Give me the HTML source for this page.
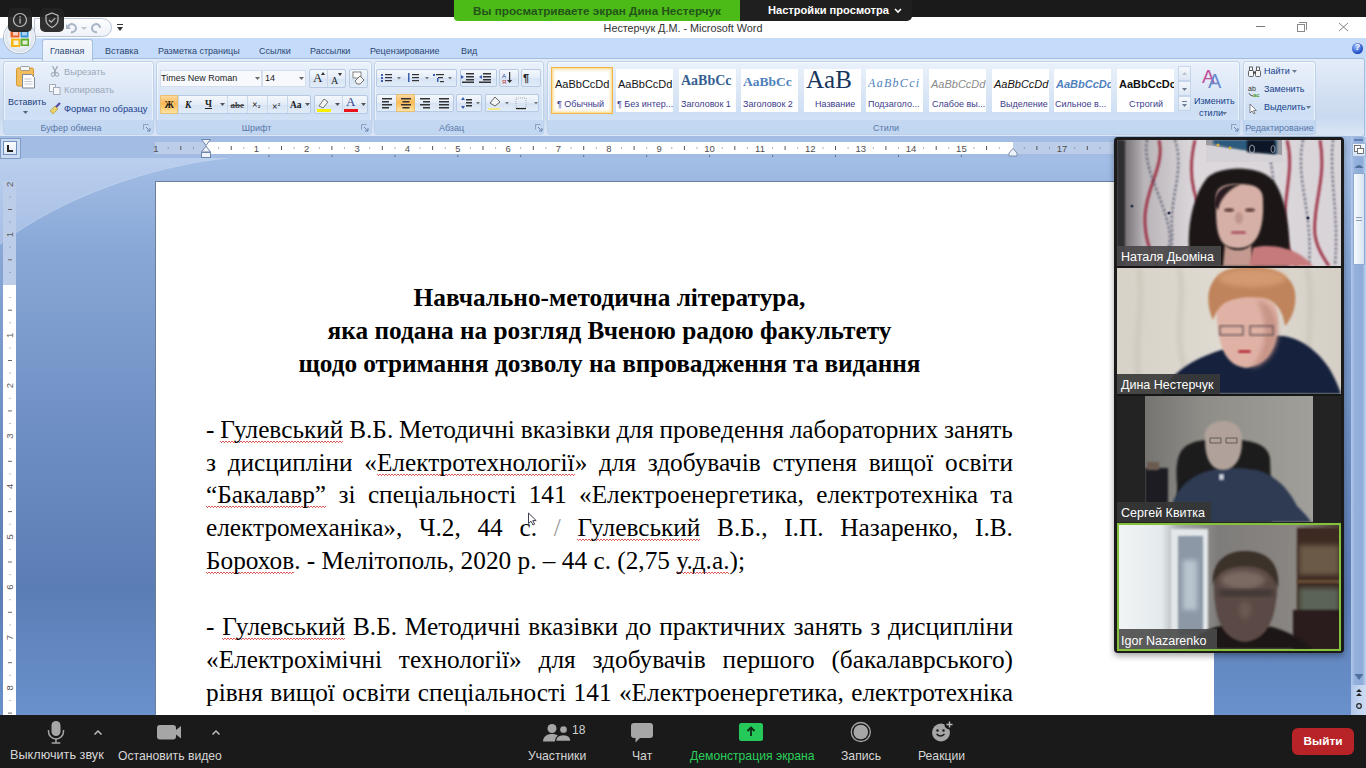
<!DOCTYPE html>
<html><head><meta charset="utf-8">
<style>
*{margin:0;padding:0;box-sizing:border-box}
html,body{width:1366px;height:768px;overflow:hidden;background:#1a1a1a;font-family:"Liberation Sans",sans-serif}
.a{position:absolute}
#ztop{left:0;top:0;width:1366px;height:17px;background:#1a1a1a}
#title{left:0;top:17px;width:1366px;height:21px;background:#fff}
#tabs{left:0;top:38px;width:1366px;height:22px;background:#c4dbf9}
#ribbon{left:0;top:58px;width:1365px;height:79px;border:1px solid #a3bcdf;border-left:none;border-radius:0 3px 3px 0;background:linear-gradient(#e4ecf8 0,#d3e0f2 45%,#c9d9ef 75%,#dbe7f7 100%)}
.grp{top:61px;height:74px;border:1px solid #bed1ea;box-shadow:inset 0 0 0 1px rgba(255,255,255,.55);border-radius:3px;background:linear-gradient(#eaf1fb 0,#dce7f6 40%,#cedff5 70%,#d6e4f6 100%)}
.glab{position:absolute;left:0;right:0;bottom:0;height:14px;padding-top:2px;background:linear-gradient(#c4d8f2,#c1d6f1);color:#5a78a8;font-size:9px;text-align:center;line-height:13px}
#rulerrow{left:0;top:137px;width:1366px;height:21px;background:#a2bce3}
#docbg{left:0;top:158px;width:1366px;height:557px;background:linear-gradient(#a3bee6 0,#88a7d6 17%,#6d8ec3 50%,#5b7db5 77%,#6a91cc 100%)}
#page{left:156px;top:182px;width:1058px;height:533px;background:#fff;box-shadow:-1px -1px 0 #6a7d9a}
#zbot{left:0;top:715px;width:1366px;height:53px;background:#1a1a1a}
.doc{position:absolute;left:206px;width:807px;font-family:"Liberation Serif",serif;font-size:25.3px;color:#000;white-space:nowrap;line-height:32.9px;height:32.9px}
.h{font-weight:bold;text-align:center}
.fj{display:flex;justify-content:space-between}.fj b{font-weight:normal}.sq{font-style:normal}
.sq{background-image:linear-gradient(45deg,transparent 30%,#e05a5a 35% 58%,transparent 58%),linear-gradient(-45deg,transparent 35%,#e05a5a 35% 58%,transparent 58%);background-size:3px 2px;background-repeat:repeat-x;background-position:0 100%}
.tab{position:absolute;top:45.5px;font-size:9px;color:#2c4674;white-space:nowrap}
.zl{position:absolute;top:748.5px;font-size:12.2px;color:#d6d6d6;white-space:nowrap}
.rt{position:absolute;font-size:9px;color:#15428b;white-space:nowrap;line-height:11px}
.sf{font-family:"Liberation Serif",serif;color:#222;line-height:14px}
.bg{position:absolute;border:1px solid #b6cae4;border-radius:2px;background:linear-gradient(#f5f8fc,#e3ecf8 50%,#d6e3f4 51%,#e2ecf8)}
.hl{position:absolute;border:1px solid #e8c070;border-radius:1px;background:linear-gradient(#fcd9a0,#fbb955 45%,#fbc466 60%,#fde3a4)}
.stile{position:absolute;top:69px;width:57px;height:43px;background:#fff}
.ssam{position:absolute;top:77px;white-space:nowrap;line-height:14px}
.slab{position:absolute;top:99px;font-size:9px;color:#3d3a8c;white-space:nowrap;line-height:11px}
.vn{position:absolute;font-size:12.5px;color:#fff;white-space:nowrap;line-height:14px}
</style></head><body>
<div id="ztop" class="a"></div>
<div id="title" class="a"></div>
<div id="tabs" class="a"></div>
<div class="a" style="left:0;top:58px;width:1366px;height:80px;background:#d6e3f5"></div>
<div id="ribbon" class="a"></div>
<!--TOPSTART-->
<!-- groups -->
<div class="a grp" style="left:3px;width:151px"><div class="glab" style="padding-right:15px">Буфер обмена</div></div>
<div class="a grp" style="left:156px;width:216px"><div class="glab" style="padding-right:15px">Шрифт</div></div>
<div class="a grp" style="left:374px;width:170px"><div class="glab" style="padding-right:15px">Абзац</div></div>
<div class="a grp" style="left:547px;width:693px"><div class="glab" style="padding-right:15px">Стили</div></div>
<div class="a grp" style="left:1243px;width:73px"><div class="glab">Редактирование</div></div>


<!-- zoom top banner -->
<div class="a" style="left:454px;top:0;width:286px;height:21px;background:#4cbb17;border-radius:0 0 0 4px;color:#24541a;font-weight:bold;font-size:11.7px;line-height:21px;text-align:center">Вы просматриваете экран Дина Нестерчук</div>
<div class="a" style="left:740px;top:0;width:172px;height:21px;background:#1f1f1f;border-radius:0 0 5px 0;color:#fff;font-weight:bold;font-size:11.1px;line-height:21px;padding-left:28px">Настройки просмотра</div>
<svg class="a" style="left:893px;top:7px" width="10" height="8"><path d="M2 2 L5 5 L8 2" stroke="#fff" stroke-width="1.6" fill="none"/></svg>
<!-- title -->
<div class="a" style="left:0;top:22px;width:1366px;text-align:center;font-size:10.8px;color:#333;padding-left:0">Нестерчук Д.М. - Microsoft Word</div>
<div class="a" style="left:1256px;top:26px;width:9px;height:1px;background:#777"></div>
<div class="a" style="left:1297px;top:24px;width:8px;height:8px;border:1px solid #888;background:#fff"></div>
<div class="a" style="left:1299px;top:22px;width:8px;height:8px;border-top:1px solid #888;border-right:1px solid #888"></div>
<svg class="a" style="left:1338px;top:22px" width="11" height="10"><path d="M1 1 L10 9 M10 1 L1 9" stroke="#888" stroke-width="1"/></svg>
<!-- QAT -->
<div class="a" style="left:34px;top:18px;width:78px;height:19px;border:1px solid #b9c6d8;border-radius:0 10px 10px 0;background:linear-gradient(#fdfdfe,#eef2f8)"></div>
<svg class="a" style="left:62px;top:21px" width="50" height="14"><path d="M6 7 a4 4 0 1 1 3 4" stroke="#a7b4c6" stroke-width="2" fill="none"/><path d="M4 3 l0 5 l5 0" fill="#a7b4c6"/><path d="M19 6 l3 3 l3 -3z" fill="#c0c8d4"/><path d="M38 7 a4 4 0 1 0 -3 4" stroke="#a7b4c6" stroke-width="2" fill="none"/></svg>
<svg class="a" style="left:116px;top:22px" width="8" height="12"><rect x="1" y="2" width="6" height="1" fill="#333"/><path d="M1 5 h6 l-3 4z" fill="#333"/></svg>
<!-- office button -->
<div class="a" style="left:4px;top:22px;width:31px;height:31px;border-radius:50%;background:radial-gradient(circle at 50% 45%,#ffffff 0,#eef2f7 45%,#cdd7e4 80%,#b9c5d5 100%);box-shadow:0 0 0 1px #aab6c6, inset 0 0 0 1px #f4f6fa"></div>
<svg class="a" style="left:10px;top:29px" width="20" height="19">
<rect x="0.5" y="1" width="9" height="7.5" fill="#e8632a"/><rect x="10.5" y="1" width="8" height="7.5" fill="#2f8fd8"/>
<rect x="1" y="9.5" width="9" height="8.5" fill="#f6b614"/><rect x="10.5" y="9.5" width="8.5" height="7.5" fill="#5faa2a"/>
<rect x="3" y="3" width="5" height="3.5" fill="#fff" opacity=".7"/><rect x="12" y="3" width="5" height="3.5" fill="#fff" opacity=".6"/>
<rect x="3.5" y="11.5" width="5" height="4.5" fill="#fff" opacity=".85"/><rect x="12.5" y="11.5" width="5" height="4" fill="#fff" opacity=".8"/>
</svg>
<!-- zoom overlay icons -->
<div class="a" style="left:8px;top:8px;width:24px;height:24px;border-radius:5px;background:rgba(34,34,34,.94)"></div>
<svg class="a" style="left:8px;top:8px" width="24" height="24"><circle cx="12" cy="12" r="6.5" stroke="#bbb" stroke-width="1.2" fill="none"/><rect x="11.4" y="10.5" width="1.3" height="5" fill="#bbb"/><rect x="11.4" y="8" width="1.3" height="1.4" fill="#bbb"/></svg>
<div class="a" style="left:40px;top:8px;width:24px;height:24px;border-radius:5px;background:rgba(34,34,34,.94)"></div>
<svg class="a" style="left:40px;top:8px" width="24" height="24"><path d="M12 5 L18 7.5 V12 C18 15.5 15 18 12 19.5 C9 18 6 15.5 6 12 V7.5 Z" stroke="#bbb" stroke-width="1.2" fill="none"/><path d="M9 12 l2.2 2.2 l4 -4" stroke="#bbb" stroke-width="1.2" fill="none"/></svg>
<!-- tabs -->
<div class="a" style="left:42px;top:39px;width:51px;height:22px;border:1px solid #a9c1e0;border-bottom:none;border-radius:3px 3px 0 0;background:linear-gradient(#f3f7fc,#e7eff9)"></div>
<div class="tab" style="left:50px">Главная</div>
<div class="tab" style="left:105px">Вставка</div>
<div class="tab" style="left:158px">Разметка страницы</div>
<div class="tab" style="left:259px">Ссылки</div>
<div class="tab" style="left:310px">Рассылки</div>
<div class="tab" style="left:370px">Рецензирование</div>
<div class="tab" style="left:461px">Вид</div>
<div class="a" style="left:1352px;top:43px;width:11px;height:11px;border-radius:50%;background:radial-gradient(circle at 40% 35%,#9cc0ff,#1b48c4 70%);box-shadow:0 0 0 1px #c8d6ea"></div>
<div class="a" style="left:1352px;top:42px;width:11px;font-size:9px;font-weight:bold;color:#fff;text-align:center">?</div>

<!--RIBBON-->
<!-- ribbon contents -->
<!-- clipboard -->
<svg class="a" style="left:15px;top:66px" width="22" height="23">
 <rect x="1.5" y="2" width="17" height="18" rx="1.5" fill="#f2bd5c" stroke="#d69a33" stroke-width="1"/>
 <rect x="5.5" y="0.5" width="9" height="4" rx="1" fill="#f7f7f7" stroke="#8a8a8a" stroke-width="0.8"/>
 <path d="M7.5 8.5 h9 l3 3 v10.5 h-12z" fill="#fdfdfd" stroke="#7f8a99" stroke-width="1"/>
 <path d="M9.5 13 h7 M9.5 15.5 h8 M9.5 18 h8" stroke="#c4c9d1" stroke-width="1"/>
</svg>
<div class="rt" style="left:8px;top:97px;color:#1d3f80">Вставить</div>
<svg class="a" style="left:23px;top:111px" width="5" height="3"><path d="M0 0 h5 l-2.5 3z" fill="#55647a"/></svg>
<svg class="a" style="left:50px;top:66px" width="10" height="11"><path d="M2.5 0 L6 7 M7.5 0 L4 7" stroke="#9aa5b3" stroke-width="1.2"/><circle cx="3" cy="8.5" r="1.8" fill="none" stroke="#9aa5b3" stroke-width="1"/><circle cx="7" cy="8.5" r="1.8" fill="none" stroke="#9aa5b3" stroke-width="1"/></svg>
<div class="rt" style="left:64px;top:67px;color:#9ba8b9;font-size:9.3px">Вырезать</div>
<svg class="a" style="left:49px;top:84px" width="12" height="11"><rect x="0.5" y="0.5" width="6" height="7" fill="#f4f6f9" stroke="#a3adba"/><rect x="4.5" y="3.5" width="6.5" height="7" fill="#f4f6f9" stroke="#a3adba"/></svg>
<div class="rt" style="left:64px;top:85px;color:#9ba8b9;font-size:9.3px">Копировать</div>
<svg class="a" style="left:49px;top:102px" width="13" height="12"><path d="M1 9 L6 4 L9 7 L4 12z" fill="#e8d26a" stroke="#a88d2a" stroke-width="0.6"/><path d="M7 5 L11 1" stroke="#5a4aa0" stroke-width="2.2"/></svg>
<div class="rt" style="left:64px;top:104px;color:#1d3f90;font-size:9.3px">Формат по образцу</div>
<svg class="a" style="left:143px;top:124px" width="8" height="8"><path d="M0.5 0.5 h5 M0.5 0.5 v5" stroke="#8aa2c4" stroke-width="1"/><path d="M3 3 L7 7 M7 4 v3 h-3" stroke="#6d87ad" stroke-width="1" fill="none"/></svg>

<!-- font group -->
<div class="a" style="left:160px;top:70px;width:102px;height:17px;background:#f7f9fc;border:1px solid #d3dfee"></div>
<div class="rt" style="left:161px;top:73px;color:#1a1a1a;font-size:9px">Times New Roman</div>
<svg class="a" style="left:255px;top:77px" width="5" height="3"><path d="M0 0 h5 l-2.5 3z" fill="#6a6a6a"/></svg>
<div class="a" style="left:262px;top:70px;width:44px;height:17px;background:#f7f9fc;border:1px solid #d3dfee"></div>
<div class="rt" style="left:265px;top:73px;color:#1a1a1a">14</div>
<svg class="a" style="left:299px;top:77px" width="5" height="3"><path d="M0 0 h5 l-2.5 3z" fill="#6a6a6a"/></svg>
<div class="bg" style="left:309px;top:69px;width:37px;height:19px"></div>
<div class="a" style="left:327px;top:70px;width:1px;height:17px;background:#c9d7ea"></div>
<div class="a sf" style="left:313px;top:71px;font-size:13px">A</div>
<div class="a sf" style="left:331px;top:74px;font-size:10px">A</div>
<svg class="a" style="left:321px;top:72px" width="4" height="3"><path d="M0 3 L2 0 L4 3" fill="#333"/></svg>
<svg class="a" style="left:338px;top:73px" width="4" height="3"><path d="M0 0 L2 3 L4 0" fill="#333"/></svg>
<div class="bg" style="left:349px;top:69px;width:19px;height:19px"></div>
<svg class="a" style="left:351px;top:71px" width="15" height="15"><rect x="2" y="1" width="8" height="6" fill="#fff" stroke="#666" stroke-width="0.8"/><path d="M4 10 L9 5 L13 9 L9 13 L6 13z" fill="#f4f4f4" stroke="#666" stroke-width="0.9"/></svg>

<div class="bg" style="left:160px;top:95px;width:151px;height:19px"></div>
<div class="hl" style="left:160px;top:95px;width:18px;height:19px"></div>
<div class="a sf" style="left:164.5px;top:97.5px;font-size:9.5px;font-weight:bold">Ж</div>
<div class="a sf" style="left:185px;top:97.5px;font-size:9.5px;font-weight:bold;font-style:italic">К</div>
<div class="a sf" style="left:205px;top:97px;font-size:9.5px;font-weight:bold;text-decoration:underline">Ч</div>
<svg class="a" style="left:220px;top:103px" width="5" height="3"><path d="M0 0 h5 l-2.5 3z" fill="#555"/></svg>
<div class="a sf" style="left:230.5px;top:97.5px;font-size:9px;font-weight:bold;text-decoration:line-through;color:#444">abe</div>
<div class="a sf" style="left:252px;top:97.5px;font-size:10px;font-weight:bold">×<span style="font-size:5px">2</span></div>
<div class="a sf" style="left:272px;top:97.5px;font-size:10px;font-weight:bold">×<span style="font-size:5px;vertical-align:4px">2</span></div>
<div class="a sf" style="left:290px;top:98px;font-size:9.5px;font-weight:bold">Aa</div>
<svg class="a" style="left:305px;top:103px" width="5" height="3"><path d="M0 0 h5 l-2.5 3z" fill="#555"/></svg>
<div class="a" style="left:178px;top:96px;width:1px;height:17px;background:#c9d7ea"></div>
<div class="a" style="left:227px;top:96px;width:1px;height:17px;background:#c9d7ea"></div>
<div class="a" style="left:247px;top:96px;width:1px;height:17px;background:#c9d7ea"></div>
<div class="a" style="left:267px;top:96px;width:1px;height:17px;background:#c9d7ea"></div>
<div class="a" style="left:287px;top:96px;width:1px;height:17px;background:#c9d7ea"></div>
<div class="bg" style="left:314px;top:95px;width:54px;height:19px"></div>
<svg class="a" style="left:316px;top:97px" width="16" height="16"><path d="M3 9 L8 2 L12 5 L7 11z" fill="#f4f4f4" stroke="#666" stroke-width="0.9"/><rect x="1" y="12" width="14" height="3" fill="#f8f000"/></svg>
<svg class="a" style="left:335px;top:103px" width="5" height="3"><path d="M0 0 h5 l-2.5 3z" fill="#555"/></svg>
<div class="a" style="left:342px;top:96px;width:1px;height:17px;background:#c9d7ea"></div>
<div class="a sf" style="left:346px;top:95px;font-size:13px;color:#2b3f8f">A</div>
<div class="a" style="left:344px;top:109px;width:14px;height:3px;background:#e8141a"></div>
<svg class="a" style="left:361px;top:103px" width="5" height="3"><path d="M0 0 h5 l-2.5 3z" fill="#555"/></svg>
<svg class="a" style="left:361px;top:124px" width="8" height="8"><path d="M0.5 0.5 h5 M0.5 0.5 v5" stroke="#8aa2c4" stroke-width="1"/><path d="M3 3 L7 7 M7 4 v3 h-3" stroke="#6d87ad" stroke-width="1" fill="none"/></svg>

<!-- paragraph group -->
<div class="bg" style="left:376px;top:69px;width:81px;height:18px"></div>
<div class="bg" style="left:460px;top:69px;width:37px;height:18px"></div>
<div class="bg" style="left:499px;top:69px;width:20px;height:18px"></div>
<div class="bg" style="left:521px;top:69px;width:20px;height:18px"></div>
<div class="bg" style="left:376px;top:94px;width:78px;height:18px"></div>
<div class="hl" style="left:396px;top:94px;width:19px;height:18px"></div>
<div class="bg" style="left:456px;top:94px;width:26px;height:18px"></div>
<div class="bg" style="left:485px;top:94px;width:54px;height:18px"></div>
<svg class="a" style="left:376px;top:69px" width="170" height="45">
 <g fill="#333">
 <!-- bullets -->
 <rect x="5" y="5" width="2" height="2" fill="#3b5fb0"/><rect x="5" y="8" width="2" height="2" fill="#3b5fb0"/><rect x="5" y="11" width="2" height="2" fill="#3b5fb0"/>
 <rect x="9" y="5" width="7" height="1.2"/><rect x="9" y="8" width="7" height="1.2"/><rect x="9" y="11" width="7" height="1.2"/>
 <path d="M21 8 h4 l-2 2.5z" fill="#777"/>
 <rect x="32" y="4" width="1.5" height="9" fill="#3b5fb0"/>
 <rect x="36" y="5" width="7" height="1.2"/><rect x="36" y="8" width="7" height="1.2"/><rect x="36" y="11" width="7" height="1.2"/>
 <path d="M49 8 h4 l-2 2.5z" fill="#777"/>
 <rect x="57" y="5" width="2" height="2" fill="#3b5fb0"/><rect x="60" y="5" width="8" height="1.2"/><rect x="62" y="8" width="5" height="1.2"/><rect x="61" y="9" width="1.5" height="4" fill="#3b5fb0"/><rect x="64" y="12" width="4" height="1.2"/>
 <path d="M72 8 h4 l-2 2.5z" fill="#777"/>
 <!-- indents -->
 <rect x="90" y="4" width="8" height="1.5"/><rect x="90" y="7" width="8" height="1.5"/><rect x="90" y="10" width="8" height="1.5"/><path d="M85 6 l3 2 l-3 2z" fill="#3b5fb0"/><rect x="86" y="12.5" width="12" height="1.5"/>
 <rect x="107" y="4" width="8" height="1.5"/><rect x="107" y="7" width="8" height="1.5"/><rect x="107" y="10" width="8" height="1.5"/><path d="M106 6 l-3 2 l3 2z" fill="#3b5fb0"/><rect x="103" y="12.5" width="12" height="1.5"/>
 <!-- sort -->
 <text x="126" y="9" font-size="6" font-family="Liberation Sans" fill="#2b4a9a">A</text><text x="126" y="15" font-size="6" font-family="Liberation Sans" fill="#c0302a">Я</text><rect x="133" y="3" width="1.2" height="10"/><path d="M131 11 l2.6 3 l2.6 -3z"/>
 <!-- pilcrow -->
 <text x="147" y="13" font-size="11" font-weight="bold" font-family="Liberation Sans" fill="#222">¶</text>
 <!-- align -->
 <g transform="translate(0,25)">
 <rect x="6" y="4" width="10" height="1.5"/><rect x="6" y="7" width="7" height="1.5"/><rect x="6" y="10" width="10" height="1.5"/><rect x="6" y="13" width="7" height="1.5"/>
 <rect x="25" y="4" width="10" height="1.5"/><rect x="26.5" y="7" width="7" height="1.5"/><rect x="25" y="10" width="10" height="1.5"/><rect x="26.5" y="13" width="7" height="1.5"/>
 <rect x="44" y="4" width="10" height="1.5"/><rect x="47" y="7" width="7" height="1.5"/><rect x="44" y="10" width="10" height="1.5"/><rect x="47" y="13" width="7" height="1.5"/>
 <rect x="63" y="4" width="10" height="1.5"/><rect x="63" y="7" width="10" height="1.5"/><rect x="63" y="10" width="10" height="1.5"/><rect x="63" y="13" width="10" height="1.5"/>
 <path d="M85 6 l2 -3 l2 3z M85 12 l2 3 l2 -3z" fill="#3b5fb0"/><rect x="90" y="5" width="6" height="1.5"/><rect x="90" y="8" width="6" height="1.5"/><rect x="90" y="11" width="6" height="1.5"/>
 <path d="M100 8 h4 l-2 2.5z" fill="#777"/>
 <path d="M114 9 l5 -6 l5 5 l-5 4z" fill="#f4f4f4" stroke="#555" stroke-width="0.9"/><rect x="112" y="14" width="12" height="2" fill="#f4e98a"/>
 <path d="M129 8 h4 l-2 2.5z" fill="#777"/>
 <rect x="140" y="4" width="10" height="10" fill="none" stroke="#999" stroke-width="0.8" stroke-dasharray="1 1"/><rect x="140" y="14" width="10" height="1.2" fill="#222"/>
 <path d="M158 8 h4 l-2 2.5z" fill="#777"/>
 </g>
 </g>
</svg>
<svg class="a" style="left:535px;top:124px" width="8" height="8"><path d="M0.5 0.5 h5 M0.5 0.5 v5" stroke="#8aa2c4" stroke-width="1"/><path d="M3 3 L7 7 M7 4 v3 h-3" stroke="#6d87ad" stroke-width="1" fill="none"/></svg>

<!-- styles gallery -->
<div class="a" style="left:551px;top:67px;width:62px;height:47px;border:1px solid #f0b64a;box-shadow:inset 0 0 0 1px #fde09a, inset 0 0 3px 2px #fbe7b8;background:#fff"></div>
<div class="stile" style="left:616px"></div>
<div class="stile" style="left:679px"></div>
<div class="stile" style="left:741px"></div>
<div class="stile" style="left:804px"></div>
<div class="stile" style="left:866px"></div>
<div class="stile" style="left:929px"></div>
<div class="stile" style="left:992px"></div>
<div class="stile" style="left:1054px"></div>
<div class="stile" style="left:1117px"></div>
<div class="ssam" style="left:555px;font-size:11px;color:#111">AaBbCcDd</div>
<div class="slab" style="left:557px">¶ Обычный</div>
<div class="ssam" style="left:618px;font-size:11px;color:#111">AaBbCcDd</div>
<div class="slab" style="left:617px">¶ Без интер...</div>
<div class="ssam" style="left:681px;width:55px;overflow:hidden;font-family:'Liberation Serif',serif;font-weight:bold;font-size:14px;color:#365f91;top:74px">AaBbCc</div>
<div class="slab" style="left:681px">Заголовок 1</div>
<div class="ssam" style="left:743px;width:55px;overflow:hidden;font-family:'Liberation Serif',serif;font-weight:bold;font-size:13.5px;color:#4f81bd;top:75px">AaBbCc</div>
<div class="slab" style="left:743px">Заголовок 2</div>
<div class="ssam" style="left:806px;font-family:'Liberation Serif',serif;font-size:25px;color:#17365d;top:66px;line-height:28px;width:54px;overflow:hidden">AaB</div>
<div class="slab" style="left:815px">Название</div>
<div class="ssam" style="left:868px;width:55px;overflow:hidden;font-family:'Liberation Serif',serif;font-style:italic;font-size:12px;letter-spacing:1.3px;color:#4f81bd;top:76px">AaBbCci</div>
<div class="slab" style="left:868px">Подзаголо...</div>
<div class="ssam" style="left:931px;font-style:italic;font-size:11px;color:#8a8a8a">AaBbCcDd</div>
<div class="slab" style="left:932px">Слабое вы...</div>
<div class="ssam" style="left:994px;font-style:italic;font-size:11px;color:#111">AaBbCcDd</div>
<div class="slab" style="left:1000px">Выделение</div>
<div class="ssam" style="left:1056px;width:55px;overflow:hidden;font-style:italic;font-weight:bold;font-size:11px;color:#4f81bd">AaBbCcDd</div>
<div class="slab" style="left:1055px">Сильное в...</div>
<div class="ssam" style="left:1119px;width:55px;overflow:hidden;font-weight:bold;font-size:11px;color:#111">AaBbCcDc</div>
<div class="slab" style="left:1129px">Строгий</div>
<!-- scroll buttons -->
<div class="a" style="left:1178px;top:66px;width:13px;height:15px;background:linear-gradient(#f4f7fb,#dde7f4);border:1px solid #c6d6ea"></div>
<div class="a" style="left:1178px;top:81px;width:13px;height:15px;background:linear-gradient(#f4f7fb,#dde7f4);border:1px solid #c6d6ea"></div>
<div class="a" style="left:1178px;top:96px;width:13px;height:15px;background:linear-gradient(#f4f7fb,#dde7f4);border:1px solid #c6d6ea"></div>
<svg class="a" style="left:1178px;top:66px" width="13" height="45"><path d="M4 9 l2.5 -3 l2.5 3z" fill="#b9c3cf"/><path d="M4 22 h5 l-2.5 3z" fill="#6d7c90"/><rect x="4" y="35" width="5" height="1" fill="#6d7c90"/><path d="M4 38 h5 l-2.5 3z" fill="#6d7c90"/></svg>
<!-- change styles -->
<svg class="a" style="left:1202px;top:66px" width="30" height="24">
<text x="0" y="17" font-family="Liberation Sans" font-size="19" fill="#c0509a">A</text>
<text x="6" y="22" font-family="Liberation Sans" font-size="20" fill="#5a7fc8" fill-opacity=".9">A</text>
</svg>
<div class="rt" style="left:1194px;top:96px">Изменить</div>
<div class="rt" style="left:1199px;top:108px">стили</div>
<svg class="a" style="left:1222px;top:112px" width="5" height="3"><path d="M0 0 h5 l-2.5 3z" fill="#6a7a90"/></svg>
<svg class="a" style="left:1231px;top:124px" width="8" height="8"><path d="M0.5 0.5 h5 M0.5 0.5 v5" stroke="#8aa2c4" stroke-width="1"/><path d="M3 3 L7 7 M7 4 v3 h-3" stroke="#6d87ad" stroke-width="1" fill="none"/></svg>
<!-- editing -->
<svg class="a" style="left:1248px;top:66px" width="14" height="48">
<g fill="#f4f6f8" stroke="#444" stroke-width="0.8"><rect x="0.5" y="4.5" width="5" height="6" rx="1"/><rect x="7.5" y="4.5" width="5" height="6" rx="1"/><rect x="1.5" y="1" width="3" height="3.5"/><rect x="8.5" y="1" width="3" height="3.5"/></g><rect x="5" y="5.5" width="3" height="2" fill="#444"/>
<text x="0" y="25" font-family="Liberation Sans" font-size="7" fill="#333">ab</text><text x="5" y="31" font-family="Liberation Sans" font-size="6" font-weight="bold" fill="#4a9a2a">ac</text><path d="M1 27 q1 3 4 3" stroke="#333" stroke-width="0.8" fill="none"/>
<path d="M2 38 v9 l2 -2 l2 3 l1 -0.5 l-1.6 -3 h3z" fill="#fff" stroke="#555" stroke-width="0.7"/>
</svg>
<div class="rt" style="left:1264px;top:66px">Найти</div>
<svg class="a" style="left:1292px;top:70px" width="5" height="3"><path d="M0 0 h5 l-2.5 3z" fill="#6a7a90"/></svg>
<div class="rt" style="left:1264px;top:84px">Заменить</div>
<div class="rt" style="left:1264px;top:102px">Выделить</div>
<svg class="a" style="left:1306px;top:106px" width="5" height="3"><path d="M0 0 h5 l-2.5 3z" fill="#6a7a90"/></svg>

<!--/RIBBON-->
<div id="rulerrow" class="a"></div>
<div id="docbg" class="a"></div>
<svg class="a" style="left:0;top:158px" width="1366" height="120"><defs><linearGradient id="swg" x1="0" y1="0" x2="0" y2="1"><stop offset="0" stop-color="#c4d6f1"/><stop offset="1" stop-color="#b2c7ea"/></linearGradient></defs><path d="M0 0 H228 C150 8 60 40 0 86 Z" fill="url(#swg)" opacity=".7"/><path d="M228 0 C150 8 60 40 0 86" stroke="#c8d8f0" stroke-width="1" fill="none" opacity=".6"/></svg>
<div id="page" class="a"></div>
<!--RULER-->
<svg class="a" style="left:0;top:137px" width="1366" height="22">
<rect x="155" y="5" width="958" height="12" fill="#bccde9"/>
<rect x="206" y="5" width="807" height="12" fill="#fff"/><text x="156" y="15" font-family="Liberation Sans" font-size="9.5" fill="#505050" text-anchor="middle">1</text><rect x="268.4" y="18" width="1" height="2" fill="#5c6f8c"/><rect x="331.4" y="18" width="1" height="2" fill="#5c6f8c"/><rect x="394.4" y="18" width="1" height="2" fill="#5c6f8c"/><rect x="457.3" y="18" width="1" height="2" fill="#5c6f8c"/><rect x="520.2" y="18" width="1" height="2" fill="#5c6f8c"/><rect x="583.2" y="18" width="1" height="2" fill="#5c6f8c"/><rect x="646.2" y="18" width="1" height="2" fill="#5c6f8c"/><rect x="709.1" y="18" width="1" height="2" fill="#5c6f8c"/><rect x="772.1" y="18" width="1" height="2" fill="#5c6f8c"/><rect x="835.0" y="18" width="1" height="2" fill="#5c6f8c"/><rect x="898.0" y="18" width="1" height="2" fill="#5c6f8c"/><rect x="960.9" y="18" width="1" height="2" fill="#5c6f8c"/>
<rect x="167.7" y="10.5" width="1" height="1" fill="#666"/>
<rect x="180.3" y="9" width="1" height="4" fill="#555"/>
<rect x="192.9" y="10.5" width="1" height="1" fill="#666"/>
<rect x="218.1" y="10.5" width="1" height="1" fill="#666"/>
<rect x="230.7" y="9" width="1" height="4" fill="#555"/>
<rect x="243.3" y="10.5" width="1" height="1" fill="#666"/>
<text x="256.4" y="15" font-family="Liberation Sans" font-size="9.5" fill="#505050" text-anchor="middle">1</text>
<rect x="268.4" y="10.5" width="1" height="1" fill="#666"/>
<rect x="281.0" y="9" width="1" height="4" fill="#555"/>
<rect x="293.6" y="10.5" width="1" height="1" fill="#666"/>
<text x="306.7" y="15" font-family="Liberation Sans" font-size="9.5" fill="#505050" text-anchor="middle">2</text>
<rect x="318.8" y="10.5" width="1" height="1" fill="#666"/>
<rect x="331.4" y="9" width="1" height="4" fill="#555"/>
<rect x="344.0" y="10.5" width="1" height="1" fill="#666"/>
<text x="357.1" y="15" font-family="Liberation Sans" font-size="9.5" fill="#505050" text-anchor="middle">3</text>
<rect x="369.2" y="10.5" width="1" height="1" fill="#666"/>
<rect x="381.8" y="9" width="1" height="4" fill="#555"/>
<rect x="394.4" y="10.5" width="1" height="1" fill="#666"/>
<text x="407.4" y="15" font-family="Liberation Sans" font-size="9.5" fill="#505050" text-anchor="middle">4</text>
<rect x="419.5" y="10.5" width="1" height="1" fill="#666"/>
<rect x="432.1" y="9" width="1" height="4" fill="#555"/>
<rect x="444.7" y="10.5" width="1" height="1" fill="#666"/>
<text x="457.8" y="15" font-family="Liberation Sans" font-size="9.5" fill="#505050" text-anchor="middle">5</text>
<rect x="469.9" y="10.5" width="1" height="1" fill="#666"/>
<rect x="482.5" y="9" width="1" height="4" fill="#555"/>
<rect x="495.1" y="10.5" width="1" height="1" fill="#666"/>
<text x="508.2" y="15" font-family="Liberation Sans" font-size="9.5" fill="#505050" text-anchor="middle">6</text>
<rect x="520.2" y="10.5" width="1" height="1" fill="#666"/>
<rect x="532.8" y="9" width="1" height="4" fill="#555"/>
<rect x="545.4" y="10.5" width="1" height="1" fill="#666"/>
<text x="558.5" y="15" font-family="Liberation Sans" font-size="9.5" fill="#505050" text-anchor="middle">7</text>
<rect x="570.6" y="10.5" width="1" height="1" fill="#666"/>
<rect x="583.2" y="9" width="1" height="4" fill="#555"/>
<rect x="595.8" y="10.5" width="1" height="1" fill="#666"/>
<text x="608.9" y="15" font-family="Liberation Sans" font-size="9.5" fill="#505050" text-anchor="middle">8</text>
<rect x="621.0" y="10.5" width="1" height="1" fill="#666"/>
<rect x="633.6" y="9" width="1" height="4" fill="#555"/>
<rect x="646.1" y="10.5" width="1" height="1" fill="#666"/>
<text x="659.2" y="15" font-family="Liberation Sans" font-size="9.5" fill="#505050" text-anchor="middle">9</text>
<rect x="671.3" y="10.5" width="1" height="1" fill="#666"/>
<rect x="683.9" y="9" width="1" height="4" fill="#555"/>
<rect x="696.5" y="10.5" width="1" height="1" fill="#666"/>
<text x="709.6" y="15" font-family="Liberation Sans" font-size="9.5" fill="#505050" text-anchor="middle">10</text>
<rect x="721.7" y="10.5" width="1" height="1" fill="#666"/>
<rect x="734.3" y="9" width="1" height="4" fill="#555"/>
<rect x="746.9" y="10.5" width="1" height="1" fill="#666"/>
<text x="760.0" y="15" font-family="Liberation Sans" font-size="9.5" fill="#505050" text-anchor="middle">11</text>
<rect x="772.0" y="10.5" width="1" height="1" fill="#666"/>
<rect x="784.6" y="9" width="1" height="4" fill="#555"/>
<rect x="797.2" y="10.5" width="1" height="1" fill="#666"/>
<text x="810.3" y="15" font-family="Liberation Sans" font-size="9.5" fill="#505050" text-anchor="middle">12</text>
<rect x="822.4" y="10.5" width="1" height="1" fill="#666"/>
<rect x="835.0" y="9" width="1" height="4" fill="#555"/>
<rect x="847.6" y="10.5" width="1" height="1" fill="#666"/>
<text x="860.7" y="15" font-family="Liberation Sans" font-size="9.5" fill="#505050" text-anchor="middle">13</text>
<rect x="872.8" y="10.5" width="1" height="1" fill="#666"/>
<rect x="885.4" y="9" width="1" height="4" fill="#555"/>
<rect x="898.0" y="10.5" width="1" height="1" fill="#666"/>
<text x="911.0" y="15" font-family="Liberation Sans" font-size="9.5" fill="#505050" text-anchor="middle">14</text>
<rect x="923.1" y="10.5" width="1" height="1" fill="#666"/>
<rect x="935.7" y="9" width="1" height="4" fill="#555"/>
<rect x="948.3" y="10.5" width="1" height="1" fill="#666"/>
<text x="961.4" y="15" font-family="Liberation Sans" font-size="9.5" fill="#505050" text-anchor="middle">15</text>
<rect x="973.5" y="10.5" width="1" height="1" fill="#666"/>
<rect x="986.1" y="9" width="1" height="4" fill="#555"/>
<rect x="998.7" y="10.5" width="1" height="1" fill="#666"/>

<rect x="1023.8" y="10.5" width="1" height="1" fill="#666"/>
<rect x="1036.4" y="9" width="1" height="4" fill="#555"/>
<rect x="1049.0" y="10.5" width="1" height="1" fill="#666"/>
<text x="1062.1" y="15" font-family="Liberation Sans" font-size="9.5" fill="#505050" text-anchor="middle">17</text>
<rect x="1074.2" y="10.5" width="1" height="1" fill="#666"/>
<rect x="1086.8" y="9" width="1" height="4" fill="#555"/>
<rect x="1099.4" y="10.5" width="1" height="1" fill="#666"/>
</svg>
<svg class="a" style="left:0;top:160px" width="20" height="555">
<rect x="3" y="21" width="13" height="534" fill="#fff"/>
<rect x="3" y="21" width="13" height="104" fill="#bccde9"/>
<text transform="translate(13,24.3) rotate(-90)" font-family="Liberation Sans" font-size="9.5" fill="#5a5a5a" text-anchor="middle">2</text>
<rect x="9.5" y="36.4" width="1" height="1" fill="#808080"/>
<rect x="8" y="49.0" width="4" height="1" fill="#6a6a6a"/>
<rect x="9.5" y="61.5" width="1" height="1" fill="#808080"/>
<text transform="translate(13,74.6) rotate(-90)" font-family="Liberation Sans" font-size="9.5" fill="#5a5a5a" text-anchor="middle">1</text>
<rect x="9.5" y="86.7" width="1" height="1" fill="#808080"/>
<rect x="8" y="99.3" width="4" height="1" fill="#6a6a6a"/>
<rect x="9.5" y="111.9" width="1" height="1" fill="#808080"/>
<rect x="9.5" y="137.1" width="1" height="1" fill="#808080"/>
<rect x="8" y="149.7" width="4" height="1" fill="#6a6a6a"/>
<rect x="9.5" y="162.3" width="1" height="1" fill="#808080"/>
<text transform="translate(13,175.4) rotate(-90)" font-family="Liberation Sans" font-size="9.5" fill="#5a5a5a" text-anchor="middle">1</text>
<rect x="9.5" y="187.4" width="1" height="1" fill="#808080"/>
<rect x="8" y="200.0" width="4" height="1" fill="#6a6a6a"/>
<rect x="9.5" y="212.6" width="1" height="1" fill="#808080"/>
<text transform="translate(13,225.7) rotate(-90)" font-family="Liberation Sans" font-size="9.5" fill="#5a5a5a" text-anchor="middle">2</text>
<rect x="9.5" y="237.8" width="1" height="1" fill="#808080"/>
<rect x="8" y="250.4" width="4" height="1" fill="#6a6a6a"/>
<rect x="9.5" y="263.0" width="1" height="1" fill="#808080"/>
<text transform="translate(13,276.1) rotate(-90)" font-family="Liberation Sans" font-size="9.5" fill="#5a5a5a" text-anchor="middle">3</text>
<rect x="9.5" y="288.2" width="1" height="1" fill="#808080"/>
<rect x="8" y="300.8" width="4" height="1" fill="#6a6a6a"/>
<rect x="9.5" y="313.4" width="1" height="1" fill="#808080"/>
<text transform="translate(13,326.4) rotate(-90)" font-family="Liberation Sans" font-size="9.5" fill="#5a5a5a" text-anchor="middle">4</text>
<rect x="9.5" y="338.5" width="1" height="1" fill="#808080"/>
<rect x="8" y="351.1" width="4" height="1" fill="#6a6a6a"/>
<rect x="9.5" y="363.7" width="1" height="1" fill="#808080"/>
<text transform="translate(13,376.8) rotate(-90)" font-family="Liberation Sans" font-size="9.5" fill="#5a5a5a" text-anchor="middle">5</text>
<rect x="9.5" y="388.9" width="1" height="1" fill="#808080"/>
<rect x="8" y="401.5" width="4" height="1" fill="#6a6a6a"/>
<rect x="9.5" y="414.1" width="1" height="1" fill="#808080"/>
<text transform="translate(13,427.2) rotate(-90)" font-family="Liberation Sans" font-size="9.5" fill="#5a5a5a" text-anchor="middle">6</text>
<rect x="9.5" y="439.2" width="1" height="1" fill="#808080"/>
<rect x="8" y="451.8" width="4" height="1" fill="#6a6a6a"/>
<rect x="9.5" y="464.4" width="1" height="1" fill="#808080"/>
<text transform="translate(13,477.5) rotate(-90)" font-family="Liberation Sans" font-size="9.5" fill="#5a5a5a" text-anchor="middle">7</text>
<rect x="9.5" y="489.6" width="1" height="1" fill="#808080"/>
<rect x="8" y="502.2" width="4" height="1" fill="#6a6a6a"/>
<rect x="9.5" y="514.8" width="1" height="1" fill="#808080"/>
<text transform="translate(13,527.9) rotate(-90)" font-family="Liberation Sans" font-size="9.5" fill="#5a5a5a" text-anchor="middle">8</text>
<rect x="9.5" y="540.0" width="1" height="1" fill="#808080"/>
<rect x="8" y="552.6" width="4" height="1" fill="#6a6a6a"/>
</svg>
<svg class="a" style="left:200px;top:138px" width="13" height="22"><path d="M1.5 1.5 h9 l-4.5 6z" fill="#eef3fa" stroke="#6e87aa" stroke-width="1"/><path d="M6 8 l4.5 6 h-9z" fill="#eef3fa" stroke="#6e87aa" stroke-width="1"/><rect x="1.5" y="14.5" width="9" height="5" fill="#eef3fa" stroke="#6e87aa" stroke-width="1"/></svg>
<svg class="a" style="left:1007px;top:147px" width="13" height="11"><path d="M6 1.5 l4 4.5 v3 h-8 v-3z" fill="#eef3fa" stroke="#7d90ad" stroke-width="1"/></svg>
<div class="a" style="left:0;top:138px;width:21px;height:21px;border:1px solid #7f9dc8;background:#c9daf1"></div>
<div class="a" style="left:3px;top:141px;width:14px;height:14px;border:1px solid #6f8fc0;background:linear-gradient(#fafcff,#dfe9f6)"></div>
<div class="a" style="left:7px;top:145px;width:2px;height:7px;background:#222"></div>
<div class="a" style="left:7px;top:150px;width:6px;height:2px;background:#222"></div>
<!-- scrollbar -->
<div class="a" style="left:1351px;top:137px;width:15px;height:578px;background:linear-gradient(90deg,#b3c8ea 0,#94b0dc 25%,#8fabd9 75%,#c0d3ef 100%)"></div>
<div class="a" style="left:1354px;top:139px;width:9px;height:2px;background:#5f7fb2"></div>
<div class="a" style="left:1352px;top:143px;width:14px;height:14px;background:linear-gradient(#f0f5fc,#d4e1f3);border:1px solid #9db6da"></div>
<svg class="a" style="left:1354px;top:145px" width="11" height="10"><rect x="0.5" y="0.5" width="6" height="6" fill="#fff" stroke="#555" stroke-width="0.8"/><rect x="3.5" y="3.5" width="6" height="5" fill="#fff" stroke="#555" stroke-width="0.8"/></svg>
<svg class="a" style="left:1353px;top:162px" width="12" height="8"><path d="M1.5 6 q4.5 -6 9 0z" fill="#50709e"/></svg>
<div class="a" style="left:1353px;top:173px;width:12px;height:92px;border:1px solid #8ea8d0;border-radius:1px;background:linear-gradient(90deg,#f6f9fd,#e6eef8 60%,#d6e2f3)"></div>
<div class="a" style="left:1356px;top:217px;width:6px;height:1px;background:#8a9cb6"></div>
<div class="a" style="left:1356px;top:220px;width:6px;height:1px;background:#8a9cb6"></div>
<svg class="a" style="left:1353px;top:673px" width="12" height="8"><path d="M1.5 1 h9 l-4.5 6z" fill="#50709e"/></svg>
<div class="a" style="left:1351px;top:685px;width:15px;height:30px;background:linear-gradient(90deg,#b4caeb,#cddcf3)"></div>
<svg class="a" style="left:1353px;top:688px" width="12" height="24"><path d="M3 4 l3 -3 l3 3z M3 8 l3 -3 l3 3z" fill="#222"/><circle cx="6" cy="18" r="2.3" fill="none" stroke="#222" stroke-width="1.2"/></svg>

<!--/RULER-->

<div class="doc h" style="top:281px">Навчально-методична література,</div>
<div class="doc h" style="top:313.9px">яка подана на розгляд Вченою радою факультету</div>
<div class="doc h" style="top:346.8px;letter-spacing:-0.08px">щодо отримання дозволу на впровадження та видання</div>

<div class="doc fj" style="top:412.6px"><b>-</b><b><i class="sq">Гулевський</i></b><b>В.Б.</b><b>Методичні</b><b>вказівки</b><b>для</b><b>проведення</b><b>лабораторних</b><b>занять</b></div>
<div class="doc fj" style="top:445.5px"><b>з</b><b>дисципліни</b><b>«<i class="sq">Електротехнології</i>»</b><b>для</b><b>здобувачів</b><b>ступеня</b><b>вищої</b><b>освіти</b></div>
<div class="doc fj" style="top:478.4px"><b><i class="sq">“Бакалавр”</i></b><b>зі</b><b>спеціальності</b><b>141</b><b>«Електроенергетика,</b><b>електротехніка</b><b>та</b></div>
<div class="doc fj" style="top:511.3px"><b>електромеханіка»,</b><b>Ч.2,</b><b>44</b><b>с.</b><b style="color:#9a9a9a">/</b><b><i class="sq">Гулевський</i></b><b>В.Б.,</b><b>І.П.</b><b>Назаренко,</b><b>І.В.</b></div>
<div class="doc" style="top:544.2px"><i class="sq">Борохов</i>. - Мелітополь, 2020 р. – 44 с. (2,75 <i class="sq">у.д.а.</i>);</div>
<div class="doc fj" style="top:610.0px"><b>-</b><b><i class="sq">Гулевський</i></b><b>В.Б.</b><b>Методичні</b><b>вказівки</b><b>до</b><b>практичних</b><b>занять</b><b>з</b><b>дисципліни</b></div>
<div class="doc fj" style="top:642.9px"><b>«Електрохімічні</b><b>технології»</b><b>для</b><b>здобувачів</b><b>першого</b><b>(бакалаврського)</b></div>
<div class="doc fj" style="top:675.8px"><b>рівня</b><b>вищої</b><b>освіти</b><b>спеціальності</b><b>141</b><b>«Електроенергетика,</b><b>електротехніка</b></div>

<svg class="a" style="left:527px;top:512px" width="10" height="14"><path d="M1.5 1 V11.5 L4 9.2 L6 13 L7.6 12.2 L5.8 8.6 H9.2 Z" fill="#fff" stroke="#2a2a40" stroke-width="0.9" stroke-linejoin="round"/></svg>
<!--VIDEO-->
<!-- video panel -->
<div class="a" style="left:1114px;top:137px;width:230px;height:516px;background:#1b1b1b;border-radius:4px;box-shadow:0 3px 6px rgba(0,0,0,.35)"></div>
<svg class="a" style="left:1117px;top:140px" width="224" height="511" viewBox="0 0 224 511">
<defs>
 <filter id="b1" x="-20%" y="-20%" width="140%" height="140%"><feGaussianBlur stdDeviation="1.2"/></filter>
 <filter id="b2" x="-20%" y="-20%" width="140%" height="140%"><feGaussianBlur stdDeviation="2.5"/></filter>
 <linearGradient id="w1" x1="0" x2="1"><stop offset="0" stop-color="#5a5658"/><stop offset=".12" stop-color="#b9b4b8"/><stop offset=".35" stop-color="#dcd8dc"/><stop offset="1" stop-color="#d9d4d8"/></linearGradient>
 <linearGradient id="w2" x1="0" x2="1"><stop offset="0" stop-color="#d7d2c8"/><stop offset=".5" stop-color="#e0dbd2"/><stop offset="1" stop-color="#d5cfc6"/></linearGradient>
 <linearGradient id="w3" x1="0" x2="1"><stop offset="0" stop-color="#757470"/><stop offset=".35" stop-color="#8e8d88"/><stop offset="1" stop-color="#a09f9a"/></linearGradient>
 <linearGradient id="w4" x1="0" x2="1"><stop offset="0" stop-color="#f2f5f6"/><stop offset=".2" stop-color="#e4eaec"/><stop offset=".27" stop-color="#a8acae"/><stop offset=".45" stop-color="#7e7c7a"/><stop offset=".8" stop-color="#8a8682"/><stop offset="1" stop-color="#4a3a30"/></linearGradient>
 <clipPath id="c1"><rect x="0" y="0" width="224" height="126"/></clipPath>
 <clipPath id="c2"><rect x="0" y="128" width="224" height="126"/></clipPath>
 <clipPath id="c3"><rect x="28" y="256" width="168" height="126"/></clipPath>
 <clipPath id="c4"><rect x="2" y="385" width="220" height="124"/></clipPath>
</defs>
<!-- tile 1 -->
<g clip-path="url(#c1)">
 <rect x="0" y="0" width="224" height="126" fill="url(#w1)"/>
 <g filter="url(#b1)" fill="none" stroke-width="2.6">
  <path d="M42 0 C48 25 30 45 28 75 C27 100 35 115 40 126" stroke="#9a2a3e"/>
  <path d="M78 0 C72 25 74 50 84 70 C92 85 100 100 105 126" stroke="#9a2a3e"/>
  <path d="M170 0 C178 30 165 60 168 90 C170 110 176 120 180 126" stroke="#9a2a3e"/>
  <path d="M203 0 C210 40 195 65 198 95 C200 110 208 120 212 126" stroke="#9a2a3e"/>
 </g>
 <g fill="none" stroke-width="1.7" stroke="#262c44" stroke-dasharray="2 2.5" filter="url(#b1)">
  <path d="M30 0 C25 30 48 60 52 90 C55 105 48 118 46 126"/>
  <path d="M58 0 C68 30 52 60 55 90 C56 105 52 118 50 126"/>
  <path d="M150 0 C158 40 160 70 155 126"/>
  <path d="M186 0 C178 40 196 70 192 126"/>
  <path d="M216 0 C212 40 222 70 218 126"/>
 </g>
 <circle cx="15" cy="66" r="1.6" fill="#2e3650"/><circle cx="52" cy="73" r="1.6" fill="#2e3650"/><circle cx="191" cy="78" r="1.6" fill="#2e3650"/>
 <rect x="0" y="0" width="8" height="126" fill="#2e2e30" filter="url(#b1)"/>
 <rect x="89" y="0" width="77" height="22" fill="#d4d2d6"/>
 <path d="M89 0 H165 V15 L89 5z" fill="#9a9aa0"/>
 <path d="M96 0 H160 V14 C140 12 110 8 96 4z" fill="#2c5a7e" filter="url(#b1)"/>
 <path d="M130 0 H158 V14 L130 12z" fill="#0c1428" filter="url(#b1)"/>
 <ellipse cx="135" cy="9" rx="2.5" ry="4" fill="none" stroke="#b8b8c0" stroke-width="0.8"/>
 <ellipse cx="156" cy="9" rx="2" ry="3.5" fill="none" stroke="#a8a8b0" stroke-width="0.8"/>
 <circle cx="101" cy="5" r="1.5" fill="#d8b040"/><circle cx="113" cy="8" r="1.5" fill="#d8b040"/>
 <path d="M74 126 C68 95 74 58 90 38 C102 26 140 24 156 40 C170 58 174 95 172 126z" fill="#1f1719" filter="url(#b1)"/>
 <path d="M99 62 C97 46 108 44 122 44 C137 44 147 47 146 62 C147 82 143 99 133 105 C125 110 112 109 106 103 C99 95 99 80 99 62z" fill="#d6b0a6" filter="url(#b1)"/>
 <path d="M97 66 C98 50 106 44 124 44 C114 48 104 56 101 70z" fill="#2a1e20" filter="url(#b1)"/>
 <ellipse cx="112" cy="70" rx="5" ry="1.8" fill="#5a3a36" filter="url(#b1)"/>
 <ellipse cx="133" cy="70" rx="5" ry="1.8" fill="#5a3a36" filter="url(#b1)"/>
 <ellipse cx="122" cy="78" rx="4" ry="6" fill="#c0968c" filter="url(#b1)"/>
 <rect x="114" y="91" width="15" height="3" rx="1.5" fill="#b05868" filter="url(#b1)"/>
 <path d="M108 104 C112 112 130 112 134 104 L136 126 H106z" fill="#c49a90" filter="url(#b1)"/>
 <path d="M132 126 L136 108 C148 104 170 106 185 116 C190 120 194 123 196 126z" fill="#c77a7c" filter="url(#b1)"/>
 <rect x="0" y="106" width="104" height="20" fill="#4a484a" fill-opacity=".92"/>
</g>
<rect x="0" y="126" width="224" height="2" fill="#161616"/>
<!-- tile 2 -->
<g clip-path="url(#c2)">
 <rect x="0" y="128" width="224" height="126" fill="url(#w2)"/>
 <g filter="url(#b2)" fill="none" stroke="#c6c0b4" stroke-width="3"><path d="M22 128 C28 170 14 200 24 254"/><path d="M62 128 C70 160 55 190 68 230"/><path d="M190 128 C200 170 185 210 195 254"/></g>
 <path d="M44 254 C52 236 70 222 98 212 C112 207 128 208 148 198 C170 190 196 204 212 228 C218 238 222 248 224 254z" fill="#15213d" filter="url(#b1)"/>
 <path d="M100 180 C98 162 106 154 130 154 C154 154 162 164 161 182 C160 206 152 224 130 228 C110 226 102 210 100 180z" fill="#e0b2a6" filter="url(#b1)"/>
 <path d="M140 160 C158 164 162 180 160 200 C156 215 148 224 134 228 C150 210 152 185 140 160z" fill="#c89488" filter="url(#b2)"/>
 <path d="M96 180 C86 158 92 134 114 129 C140 124 170 128 177 148 C181 162 176 178 168 186 C166 170 158 160 146 158 C130 156 112 158 104 166 C100 170 98 175 96 180z" fill="#c0845c" filter="url(#b1)"/>
 <ellipse cx="135" cy="138" rx="34" ry="9" fill="#d39a70" filter="url(#b2)"/>
 <path d="M103 186 h23 v9 h-23z M133 186 h23 v9 h-23z" fill="none" stroke="#6a5858" stroke-width="1.4" filter="url(#b1)"/>
 <rect x="121" y="210" width="13" height="3" rx="1.5" fill="#b8323e" filter="url(#b1)"/>
 <rect x="0" y="234" width="103" height="20" fill="#3a393a" fill-opacity=".92"/>
</g>
<rect x="0" y="254" width="224" height="2" fill="#161616"/>
<!-- tile 3 -->
<rect x="0" y="256" width="224" height="127" fill="#232323"/>
<g clip-path="url(#c3)">
 <rect x="28" y="256" width="168" height="126" fill="url(#w3)"/>
 <rect x="28" y="328" width="23" height="54" fill="#1e1e20" filter="url(#b1)"/>
 <rect x="30" y="322" width="12" height="8" fill="#6a5a50" filter="url(#b1)"/>
 <path d="M60 345 C58 315 62 302 90 300 C125 298 150 300 153 318 L155 382 H60z" fill="#1e1a1b" filter="url(#b1)"/>
 <path d="M50 382 C56 350 72 335 95 330 C110 327 125 328 140 330 C160 336 172 350 180 366 C186 372 192 378 194 382z" fill="#2e3a52" filter="url(#b1)"/>
 <path d="M88 300 C86 288 95 281 106 281 C118 281 126 288 125 302 C125 318 118 330 106 330 C94 330 88 318 88 300z" fill="#b0a29a" filter="url(#b1)"/>
 <path d="M93 298 h11 v5 h-11z M109 298 h11 v5 h-11z" fill="none" stroke="#5a5250" stroke-width="0.9"/>
 <rect x="102" y="334" width="5" height="6" fill="#c8ccd6" filter="url(#b1)"/>
</g>
<rect x="0" y="362" width="94" height="20" fill="#363636" fill-opacity=".95"/>
<!-- tile 4 -->
<rect x="-1" y="383" width="226" height="128" fill="#85c23c"/>
<g clip-path="url(#c4)">
 <rect x="0" y="385" width="224" height="124" fill="url(#w4)"/>
 <rect x="54" y="389" width="37" height="110" fill="#e3e7e9" filter="url(#b1)"/>
 <rect x="61" y="396" width="25" height="100" fill="#8c98a6" filter="url(#b1)"/>
 <rect x="66" y="420" width="14" height="50" fill="#b8c4ce" filter="url(#b2)"/>
 <rect x="180" y="388" width="44" height="121" fill="#3e2c22" filter="url(#b1)"/>
 <rect x="180" y="440" width="44" height="3" fill="#6a5038" filter="url(#b1)"/>
 <rect x="182" y="405" width="40" height="30" fill="#6a5a46" filter="url(#b2)"/>
 <rect x="182" y="448" width="40" height="25" fill="#5a6456" filter="url(#b2)"/>
 <rect x="176" y="470" width="48" height="39" fill="#2a1e1a" filter="url(#b1)"/>
 <path d="M70 509 C80 492 95 484 128 484 C160 484 180 495 195 509z" fill="#1c1716" filter="url(#b1)"/>
 <path d="M97 450 C95 425 108 413 128 413 C150 413 162 425 160 452 C158 480 150 500 128 502 C106 500 98 480 97 450z" fill="#5a4a44" filter="url(#b1)"/>
 <path d="M96 445 C94 425 106 411 128 411 C152 411 163 425 161 448 C155 432 145 426 128 426 C110 426 100 432 96 445z" fill="#3a302c" filter="url(#b1)"/>
 <ellipse cx="126" cy="440" rx="22" ry="9" fill="#7a6a62" filter="url(#b2)"/>
 <ellipse cx="128" cy="470" rx="6" ry="9" fill="#6a5a52" filter="url(#b2)"/>
 <rect x="102" y="450" width="54" height="6" fill="#3e3432" filter="url(#b2)"/>
 <rect x="2" y="489" width="98" height="20" fill="#4a4a4a" fill-opacity=".9"/>
</g>
</svg>
<div class="vn" style="left:1121px;top:250px">Наталя Дьоміна</div>
<div class="vn" style="left:1121px;top:378px">Дина Нестерчук</div>
<div class="vn" style="left:1121px;top:506px">Сергей Квитка</div>
<div class="vn" style="left:1121px;top:634px">Igor Nazarenko</div>

<!--/VIDEO-->
<div id="zbot" class="a"></div>
<div class="zl" style="left:10px;font-size:12.7px;top:748px">Выключить звук</div>
<div class="zl" style="left:118px">Остановить видео</div>
<div class="zl" style="left:528px">Участники</div>
<div class="zl" style="left:632px">Чат</div>
<div class="zl" style="left:690px;color:#2ad05a">Демонстрация экрана</div>
<div class="zl" style="left:841px">Запись</div>
<div class="zl" style="left:918px">Реакции</div>
<!--ZBOT-->
<!-- zoom bottom icons -->
<svg class="a" style="left:0;top:715px" width="1366" height="53">
 <g fill="#a6a6a6">
  <!-- mic -->
  <rect x="51.5" y="6" width="9" height="15" rx="4.5"/>
  <path d="M48.5 15 v1.5 a7.5 7.5 0 0 0 15 0 v-1.5" fill="none" stroke="#a6a6a6" stroke-width="1.5"/>
  <rect x="55.2" y="24" width="1.5" height="4"/>
  <rect x="51.5" y="27.3" width="9" height="1.5" rx=".7"/>
  <path d="M94.5 19.5 l3.5 -3.5 l3.5 3.5" fill="none" stroke="#bdbdbd" stroke-width="1.5"/>
  <!-- camera -->
  <rect x="157" y="10" width="19" height="14.5" rx="3"/>
  <path d="M176 15 l5 -4 v12.5 l-5 -4z"/>
  <path d="M212.5 19.5 l3.5 -3.5 l3.5 3.5" fill="none" stroke="#bdbdbd" stroke-width="1.5"/>
  <!-- participants -->
  <circle cx="552" cy="13.5" r="4.5"/>
  <path d="M543 26.5 c0 -5 4 -7.5 9 -7.5 s9 2.5 9 7.5z"/>
  <circle cx="563.5" cy="14.5" r="4" stroke="#1a1a1a" stroke-width="1.3"/>
  <path d="M555.5 26.5 c0 -4.5 3.5 -7 8 -7 s7.5 2.5 7.5 7z" stroke="#1a1a1a" stroke-width="1.3"/>
  <!-- chat -->
  <path d="M634 8 h16 a3 3 0 0 1 3 3 v9 a3 3 0 0 1 -3 3 h-10 l-4.5 4.5 v-4.5 h-1.5 a3 3 0 0 1 -3 -3 v-9 a3 3 0 0 1 3 -3z"/>
  <!-- record -->
  <circle cx="860.8" cy="17" r="9.5" fill="none" stroke="#a6a6a6" stroke-width="1.3"/>
  <circle cx="860.8" cy="17" r="7.3"/>
  <!-- reactions -->
  <circle cx="941" cy="17.5" r="9"/>
  <circle cx="937.5" cy="15.5" r="1.2" fill="#1a1a1a"/><circle cx="943.5" cy="15.5" r="1.2" fill="#1a1a1a"/>
  <path d="M936.5 19 q4 4 8 0" fill="none" stroke="#1a1a1a" stroke-width="1.3"/>
  <circle cx="949.5" cy="9.5" r="5" fill="#1a1a1a"/>
  <path d="M946.5 9.5 h6 M949.5 6.5 v6" stroke="#bdbdbd" stroke-width="1.3"/>
 </g>
 <!-- share -->
 <rect x="739" y="8" width="24" height="18" rx="2.5" fill="#25c95a"/>
 <path d="M751 21 v-8 M747.5 16 l3.5 -3.5 l3.5 3.5" fill="none" stroke="#0e2a16" stroke-width="1.8"/>
</svg>
<div class="zl" style="left:572px;top:723px;font-size:12px;color:#cfcfcf">18</div>
<div class="a" style="left:1292px;top:728px;width:62px;height:27px;border-radius:6px;background:#b82328;color:#fff;font-weight:bold;font-size:11.8px;line-height:27px;text-align:center">Выйти</div>

<!--/ZBOT-->
</body></html>
